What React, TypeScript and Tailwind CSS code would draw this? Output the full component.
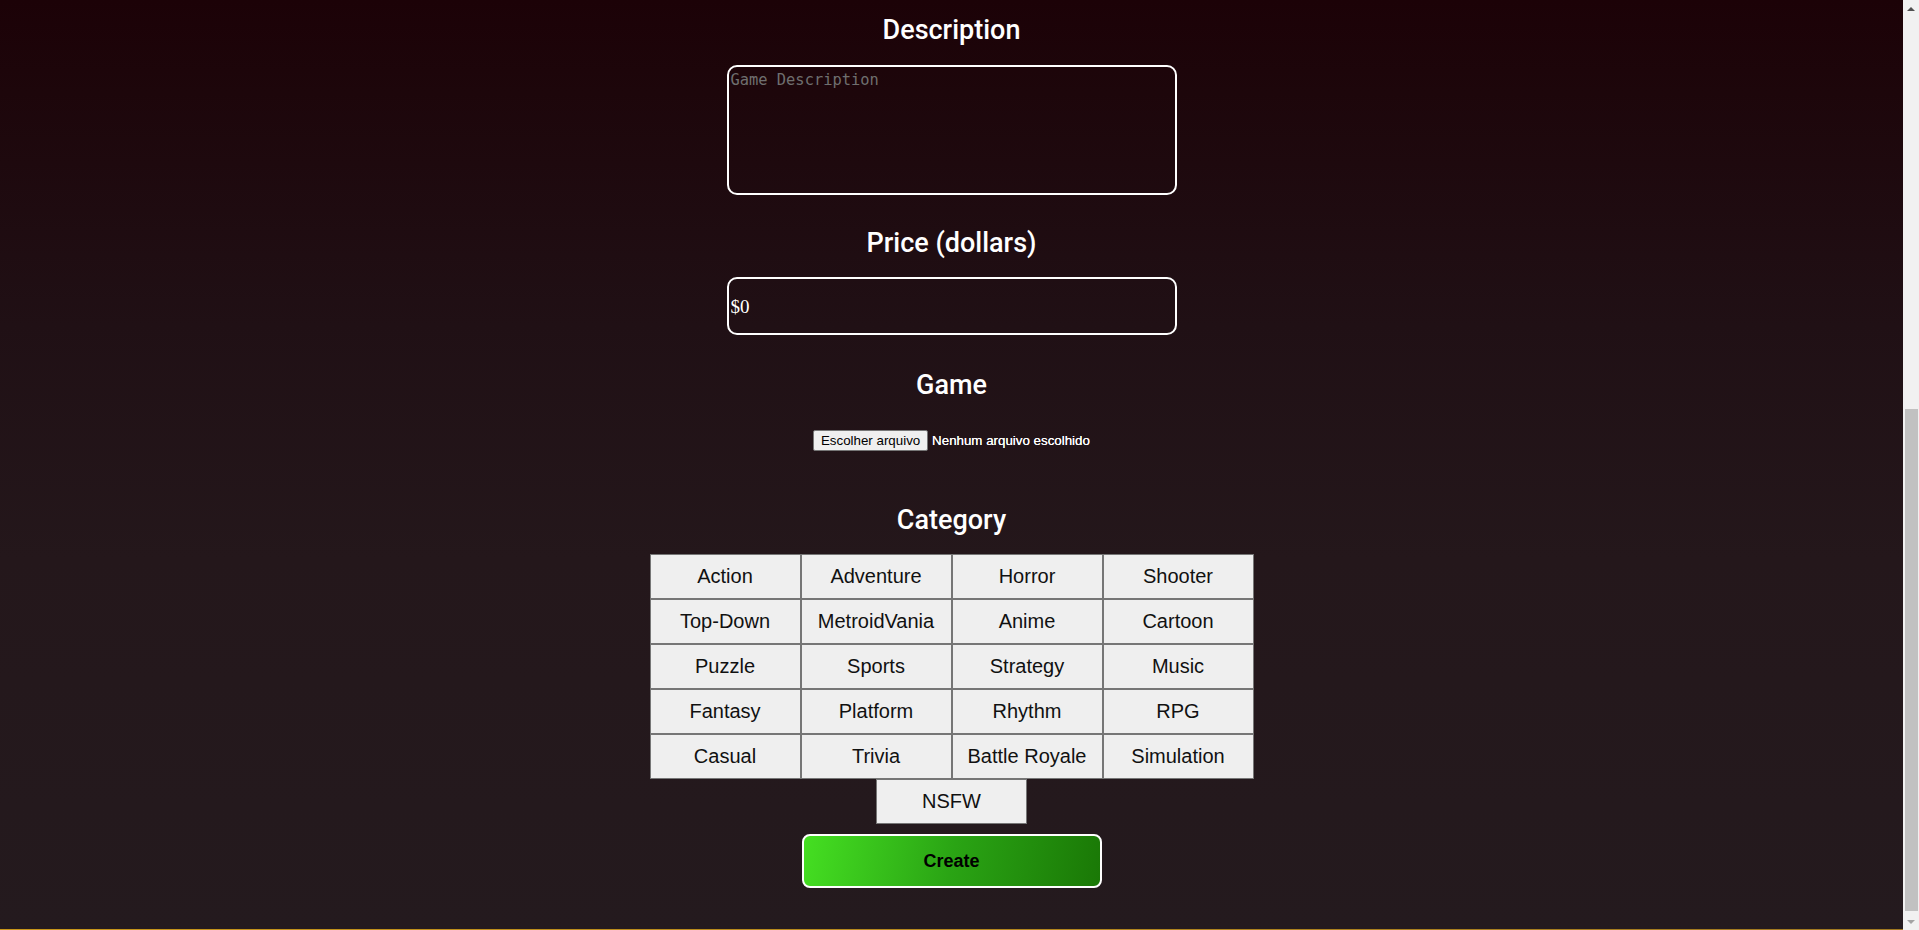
const categories = [
  "Action",
  "Adventure",
  "Horror",
  "Shooter",
  "Top-Down",
  "MetroidVania",
  "Anime",
  "Cartoon",
  "Puzzle",
  "Sports",
  "Strategy",
  "Music",
  "Fantasy",
  "Platform",
  "Rhythm",
  "RPG",
  "Casual",
  "Trivia",
  "Battle Royale",
  "Simulation",
  "NSFW",
];

function Heading({ children, className = "" }: { children: React.ReactNode; className?: string }) {
  return (
    <h2 className={`h-[33px] text-[27px] leading-[35px] font-medium text-white font-['Roboto',sans-serif] ${className}`}>
      {children}
    </h2>
  );
}

function Scrollbar() {
  return (
    <div className="flex h-full w-[16px] shrink-0 flex-col items-center bg-[#f1f1f1]">
      <div className="flex h-[17px] w-full items-center justify-center">
        <div className="h-0 w-0 border-x-[4px] border-b-[4px] border-x-transparent border-b-[#505050]" />
      </div>
      <div className="flex w-full flex-1 flex-col pl-[2px] pr-[1px]">
        <div className="h-[392px]" />
        <div className="h-[502px] w-full bg-[#c1c1c1]" />
      </div>
      <div className="flex h-[17px] w-full items-center justify-center">
        <div className="h-0 w-0 border-x-[4px] border-t-[4px] border-x-transparent border-t-[#a3a3a3]" />
      </div>
    </div>
  );
}

export default function App() {
  return (
    <div className="flex h-[930px] w-full overflow-hidden">
      <div className="flex h-full flex-1 flex-col bg-[linear-gradient(to_bottom,#1c0207_0%,#201015_35%,#24171b_60%,#241a1e_100%)]">
        <form className="flex flex-1 flex-col items-center pt-[13px]">
          <Heading>Description</Heading>
          <textarea
            placeholder="Game Description"
            className="mt-[19px] h-[130px] w-[450px] resize-none rounded-[10px] border-2 border-white bg-transparent px-[2px] pt-[4px] font-['DejaVu_Sans_Mono',monospace] text-[15.4px] leading-[18px] text-white outline-none placeholder:text-[#6f6f6f]"
          />

          <Heading className="mt-[31px]">Price (dollars)</Heading>
          <input
            readOnly
            defaultValue="$0"
            className="mt-[18px] h-[58px] w-[450px] rounded-[10px] border-2 border-white bg-transparent px-[2px] pt-[2px] font-['Liberation_Serif',serif] text-[19px] text-white outline-none"
          />

          <Heading className="mt-[33px]">Game</Heading>
          <div className="mt-[29px] flex items-center gap-[4px] font-['Liberation_Sans',Arial,sans-serif] text-[13.33px]">
            <button
              type="button"
              className="h-[21px] w-[115px] rounded-[2px] border border-[#767676] bg-[#efefef] text-black"
            >
              Escolher arquivo
            </button>
            <span className="text-white [text-shadow:0_0_0.6px_#ffffff]">Nenhum arquivo escolhido</span>
          </div>

          <Heading className="mt-[52px]">Category</Heading>
          <div className="mt-[18px] flex w-[604px] flex-wrap justify-center">
            {categories.map((c) => (
              <button
                key={c}
                type="button"
                className="h-[45px] w-[151px] border border-[#767676] bg-[#efefef] pb-[2px] font-['Liberation_Sans',Arial,sans-serif] text-[20px] text-[#111111]"
              >
                {c}
              </button>
            ))}
          </div>

          <button
            type="button"
            className="mt-[10px] h-[54px] w-[300px] rounded-[8px] border-2 border-white bg-[linear-gradient(100deg,#45df22_0%,#2aa414_50%,#1a7806_100%)] font-['Liberation_Sans',Arial,sans-serif] text-[18px] font-bold text-black"
          >
            Create
          </button>
        </form>
        <div className="h-px w-full bg-[linear-gradient(to_right,#c8961a,#a07820)]" />
      </div>
      <Scrollbar />
    </div>
  );
}
